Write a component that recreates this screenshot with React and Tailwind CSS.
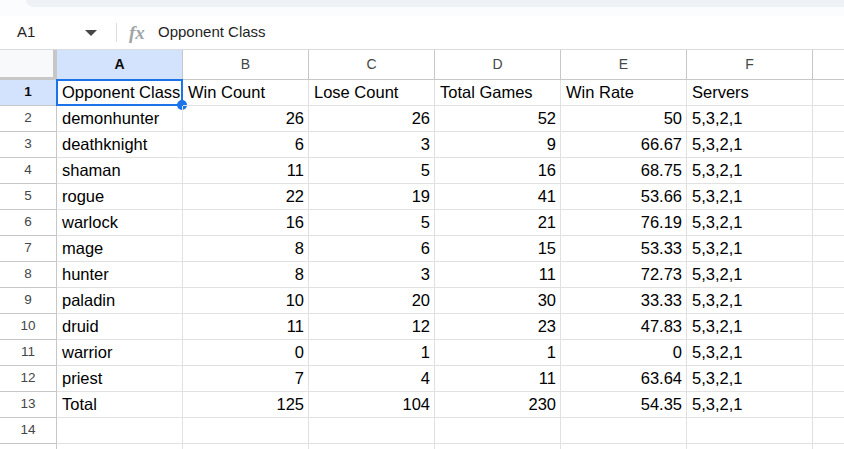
import React from "react";

const rows = [
  ["Opponent Class", "Win Count", "Lose Count", "Total Games", "Win Rate", "Servers", true],
  ["demonhunter", "26", "26", "52", "50", "5,3,2,1"],
  ["deathknight", "6", "3", "9", "66.67", "5,3,2,1"],
  ["shaman", "11", "5", "16", "68.75", "5,3,2,1"],
  ["rogue", "22", "19", "41", "53.66", "5,3,2,1"],
  ["warlock", "16", "5", "21", "76.19", "5,3,2,1"],
  ["mage", "8", "6", "15", "53.33", "5,3,2,1"],
  ["hunter", "8", "3", "11", "72.73", "5,3,2,1"],
  ["paladin", "10", "20", "30", "33.33", "5,3,2,1"],
  ["druid", "11", "12", "23", "47.83", "5,3,2,1"],
  ["warrior", "0", "1", "1", "0", "5,3,2,1"],
  ["priest", "7", "4", "11", "63.64", "5,3,2,1"],
  ["Total", "125", "104", "230", "54.35", "5,3,2,1"],
  ["", "", "", "", "", ""],
  ["", "", "", "", "", ""],
];

const cols = ["A", "B", "C", "D", "E", "F"];

export default function App() {
  return (
    <div
      className="w-[844px] h-[449px] overflow-hidden bg-white text-black"
      style={{ fontFamily: '"Liberation Sans", Arial, sans-serif' }}
    >
      {/* top band */}
      <div className="h-[16px] bg-[#fbfcfd]">
        <div className="ml-[26px] h-[7px] bg-[#eef2f7] rounded-bl-[14px]" />
      </div>
      {/* formula bar */}
      <div className="h-[34px] flex items-center border-b border-[#dadce0]">
        <div className="w-[80px] pl-[17px] text-[15px] text-[#1f1f1f]">A1</div>
        <div className="w-[22px] flex justify-center">
          <div className="w-0 h-0 border-l-[6px] border-r-[6px] border-t-[6px] border-l-transparent border-r-transparent border-t-[#444746]" />
        </div>
        <div className="ml-[14px] w-px h-[19px] bg-[#dadce0]" />
        <div
          className="ml-[12px] w-[20px] text-[19px] italic text-[#a0a4a8] font-bold leading-none"
          style={{ fontFamily: '"Liberation Serif", serif' }}
        >
          fx
        </div>
        <div className="ml-[9px] text-[15px] text-[#1f1f1f]">Opponent Class</div>
      </div>
      {/* column headers */}
      <div className="flex h-[30px]">
        <div className="w-[57px] shrink-0 flex flex-col">
          <div className="flex flex-1">
            <div className="w-[53px] bg-[#f8f9fa]" />
            <div className="w-[4px] bg-[#c7c7c7]" />
          </div>
          <div className="h-[3px] bg-[#c7c7c7]" />
        </div>
        {cols.map((c, i) => (
          <div
            key={c}
            className={`w-[126px] shrink-0 flex items-center justify-center text-[14px] border-r border-b border-[#c7c7c7] ${
              i === 0 ? "bg-[#d3e3fd] font-bold text-[#0a0a0a]" : "text-[#444746]"
            }`}
          >
            {c}
          </div>
        ))}
        <div className="flex-1 border-b border-[#c7c7c7]" />
      </div>
      {/* rows */}
      {rows.map((r, ri) => (
        <div key={ri} className="flex h-[26px]">
          <div
            className={`w-[57px] shrink-0 flex items-center justify-center text-[13.5px] border-r border-b border-[#c7c7c7] ${
              ri === 0 ? "bg-[#d3e3fd] font-bold text-[#0a0a0a]" : "text-[#444746]"
            }`}
          >
            {ri < 14 ? ri + 1 : ""}
          </div>
          {r.slice(0, 6).map((v, ci) => {
            const numeric = ri > 0 && ci >= 1 && ci <= 4;
            return (
              <div
                key={ci}
                className={`relative w-[126px] shrink-0 flex items-center text-[16.5px] whitespace-nowrap border-r border-b border-[#e1e1e1] ${
                  numeric ? "justify-end pr-[4px]" : "pl-[5px]"
                }`}
              >
                {v}
                {ri === 0 && ci === 0 && (
                  <>
                    <div className="absolute -left-px -top-px -right-px -bottom-px border-2 border-[#1a73e8] pointer-events-none" />
                    <div className="absolute -right-[5px] -bottom-[5px] w-[10px] h-[10px] rounded-full bg-[#1a73e8]" />
                  </>
                )}
              </div>
            );
          })}
          <div className="flex-1 border-b border-[#e1e1e1]" />
        </div>
      ))}
    </div>
  );
}
